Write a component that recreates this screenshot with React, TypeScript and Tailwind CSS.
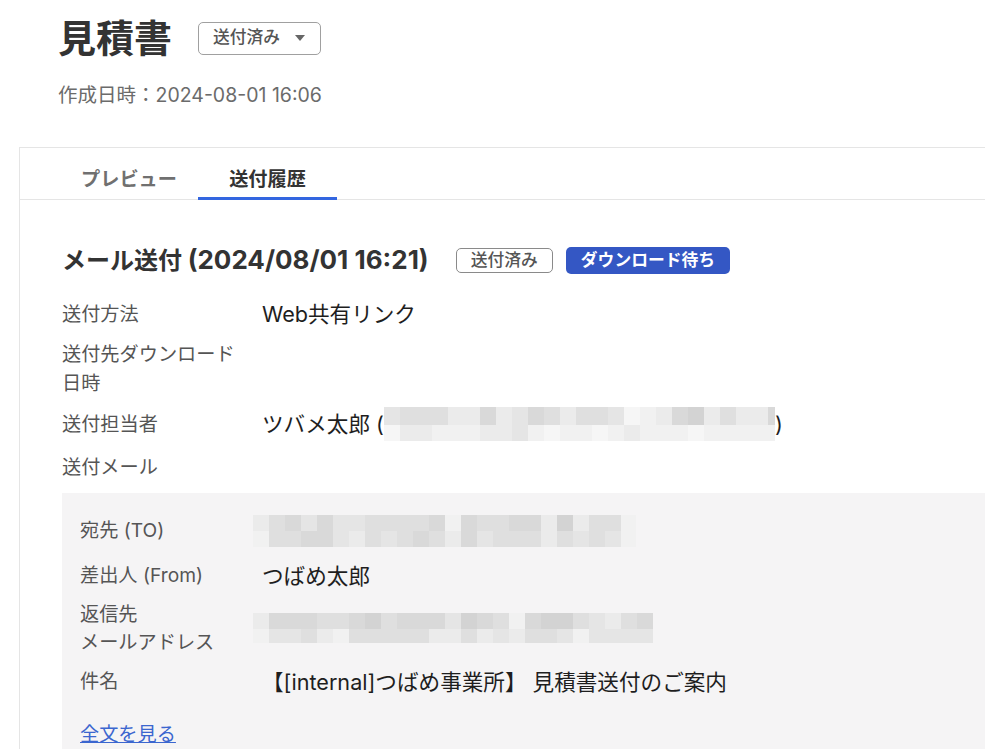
import React from "react";

const SHADES = [
  "bg-[#d3d3d3]",
  "bg-[#d9d9d9]",
  "bg-[#dfdfdf]",
  "bg-[#e5e5e5]",
  "bg-[#ebebeb]",
  "bg-[#f1f1f1]",
  "bg-[#f6f6f6]",
];

// pixelated (masked) text, one string per row of cells
const PERSON_BLUR = [
  "3222441431242236541042441",
  "6445554435655654555655555",
];
const TO_BLUR = [
  "421313322221512211404225",
  "522113423212413222423235",
];
const REPLY_BLUR = [
  "4111221021113012510023421",
  "5332452222244243422353333",
];

function Blur({
  rows,
  heights,
  className,
}: {
  rows: string[];
  heights: string[];
  className?: string;
}) {
  return (
    <div className={`flex flex-col overflow-hidden ${className ?? ""}`}>
      {rows.map((row, i) => (
        <div key={i} className={`flex ${heights[i]}`}>
          {row.split("").map((c, j) => (
            <div key={j} className={`w-[16px] shrink-0 ${SHADES[Number(c)]}`} />
          ))}
        </div>
      ))}
    </div>
  );
}

function Row({
  label,
  labelWidth = "w-[200px]",
  children,
}: {
  label: React.ReactNode;
  labelWidth?: string;
  children?: React.ReactNode;
}) {
  return (
    <div className="flex items-center">
      <div className={`${labelWidth} shrink-0 text-[19.2px] leading-[28.5px] text-[#555]`}>
        {label}
      </div>
      <div className="flex items-center text-[21.6px] leading-[32px] text-[#1e1e1e]">
        {children}
      </div>
    </div>
  );
}

function StatusSelect() {
  return (
    <button className="flex h-[33px] items-center gap-[15px] rounded-[5px] border border-[#a0a0a0] bg-white pl-[14px] pr-[15px] text-[16.8px] font-medium text-[#555]">
      送付済み
      <svg width="10" height="6" viewBox="0 0 10 6" className="text-[#666]">
        <path d="M0 0h10L5 6z" fill="currentColor" />
      </svg>
    </button>
  );
}

export default function App() {
  return (
    <div className="h-[749px] w-full overflow-hidden bg-white font-[Inter,'Noto_Sans_CJK_JP',sans-serif]">
      <div className="pl-[58px] pt-[15px]">
        <div className="flex items-center gap-[26px]">
          <h1 className="text-[38px] font-bold leading-[46px] text-[#333]">見積書</h1>
          <StatusSelect />
        </div>
        <p className="mt-[19px] text-[19.5px] leading-[30px] text-[#6b6b6b]">
          作成日時：2024-08-01 16:06
        </p>
      </div>

      <div className="-mr-[60px] ml-[19px] mt-[37px] border-l border-t border-[#e5e5e5] bg-white">
        <div className="flex border-b border-[#e5e5e5] pl-[40px]">
          <button className="-mb-px w-[138px] border-b-[3px] border-transparent pb-[3px] pt-[17px] text-center text-[19.2px] font-bold leading-[29px] text-[#707070]">
            プレビュー
          </button>
          <button className="-mb-px w-[139px] border-b-[3px] border-[#3366e0] pb-[3px] pt-[17px] text-center text-[19.2px] font-bold leading-[29px] text-[#333]">
            送付履歴
          </button>
        </div>

        <div className="pl-[42px] pr-[60px] pt-[42px]">
          <div className="flex items-center">
            <h2 className="text-[24px] font-bold leading-[36px] text-[#333]">
              メール送付 <span className="text-[26px]">(2024/08/01 16:21)</span>
            </h2>
            <span className="ml-[27px] flex h-[25px] items-center rounded-[5px] border border-[#8a8a8a] px-[14px] text-[16.8px] font-medium text-[#555]">
              送付済み
            </span>
            <span className="ml-[13px] flex h-[27px] items-center rounded-[5px] bg-[#3457c4] px-[15px] text-[16.8px] font-semibold text-white">
              ダウンロード待ち
            </span>
          </div>

          <div className="mt-[19px] flex flex-col gap-y-[10px]">
            <Row label="送付方法">Web共有リンク</Row>
            <Row
              label={
                <>
                  送付先ダウンロード
                  <br />
                  日時
                </>
              }
            />
            <Row label="送付担当者">
              <span>ツバメ太郎 (</span>
              <Blur rows={PERSON_BLUR} heights={["h-[18px]", "h-[16px]"]} className="w-[391px]" />
              <span>)</span>
            </Row>
            <div className="mt-[2px]">
              <Row label="送付メール" />
            </div>
          </div>

          <div className="mt-[11px] bg-[#f5f4f5] pb-[24px] pl-[18px] pt-[22px]">
            <div className="flex flex-col gap-y-[11px]">
              <Row label="宛先 (TO)" labelWidth="w-[182px]">
                <Blur rows={TO_BLUR} heights={["h-[16px]", "h-[16px]"]} className="-ml-[9px] w-[383px]" />
              </Row>
              <div className="mt-[2px]">
                <Row label="差出人 (From)" labelWidth="w-[182px]">
                  つばめ太郎
                </Row>
              </div>
              <div className="-mt-[3px]">
                <Row
                  label={
                    <>
                      返信先
                      <br />
                      メールアドレス
                    </>
                  }
                  labelWidth="w-[182px]"
                >
                  <Blur rows={REPLY_BLUR} heights={["h-[16px]", "h-[14px]"]} className="-ml-[9px] w-[400px]" />
                </Row>
              </div>
              <div className="-mt-[2px]">
                <Row label="件名" labelWidth="w-[182px]">
                  【[internal]つばめ事業所】 見積書送付のご案内
                </Row>
              </div>
            </div>
            <a href="#" className="mt-[22px] inline-block text-[19.2px] leading-[29px] text-[#3b66cf] underline">
              全文を見る
            </a>
          </div>
        </div>
      </div>
    </div>
  );
}
